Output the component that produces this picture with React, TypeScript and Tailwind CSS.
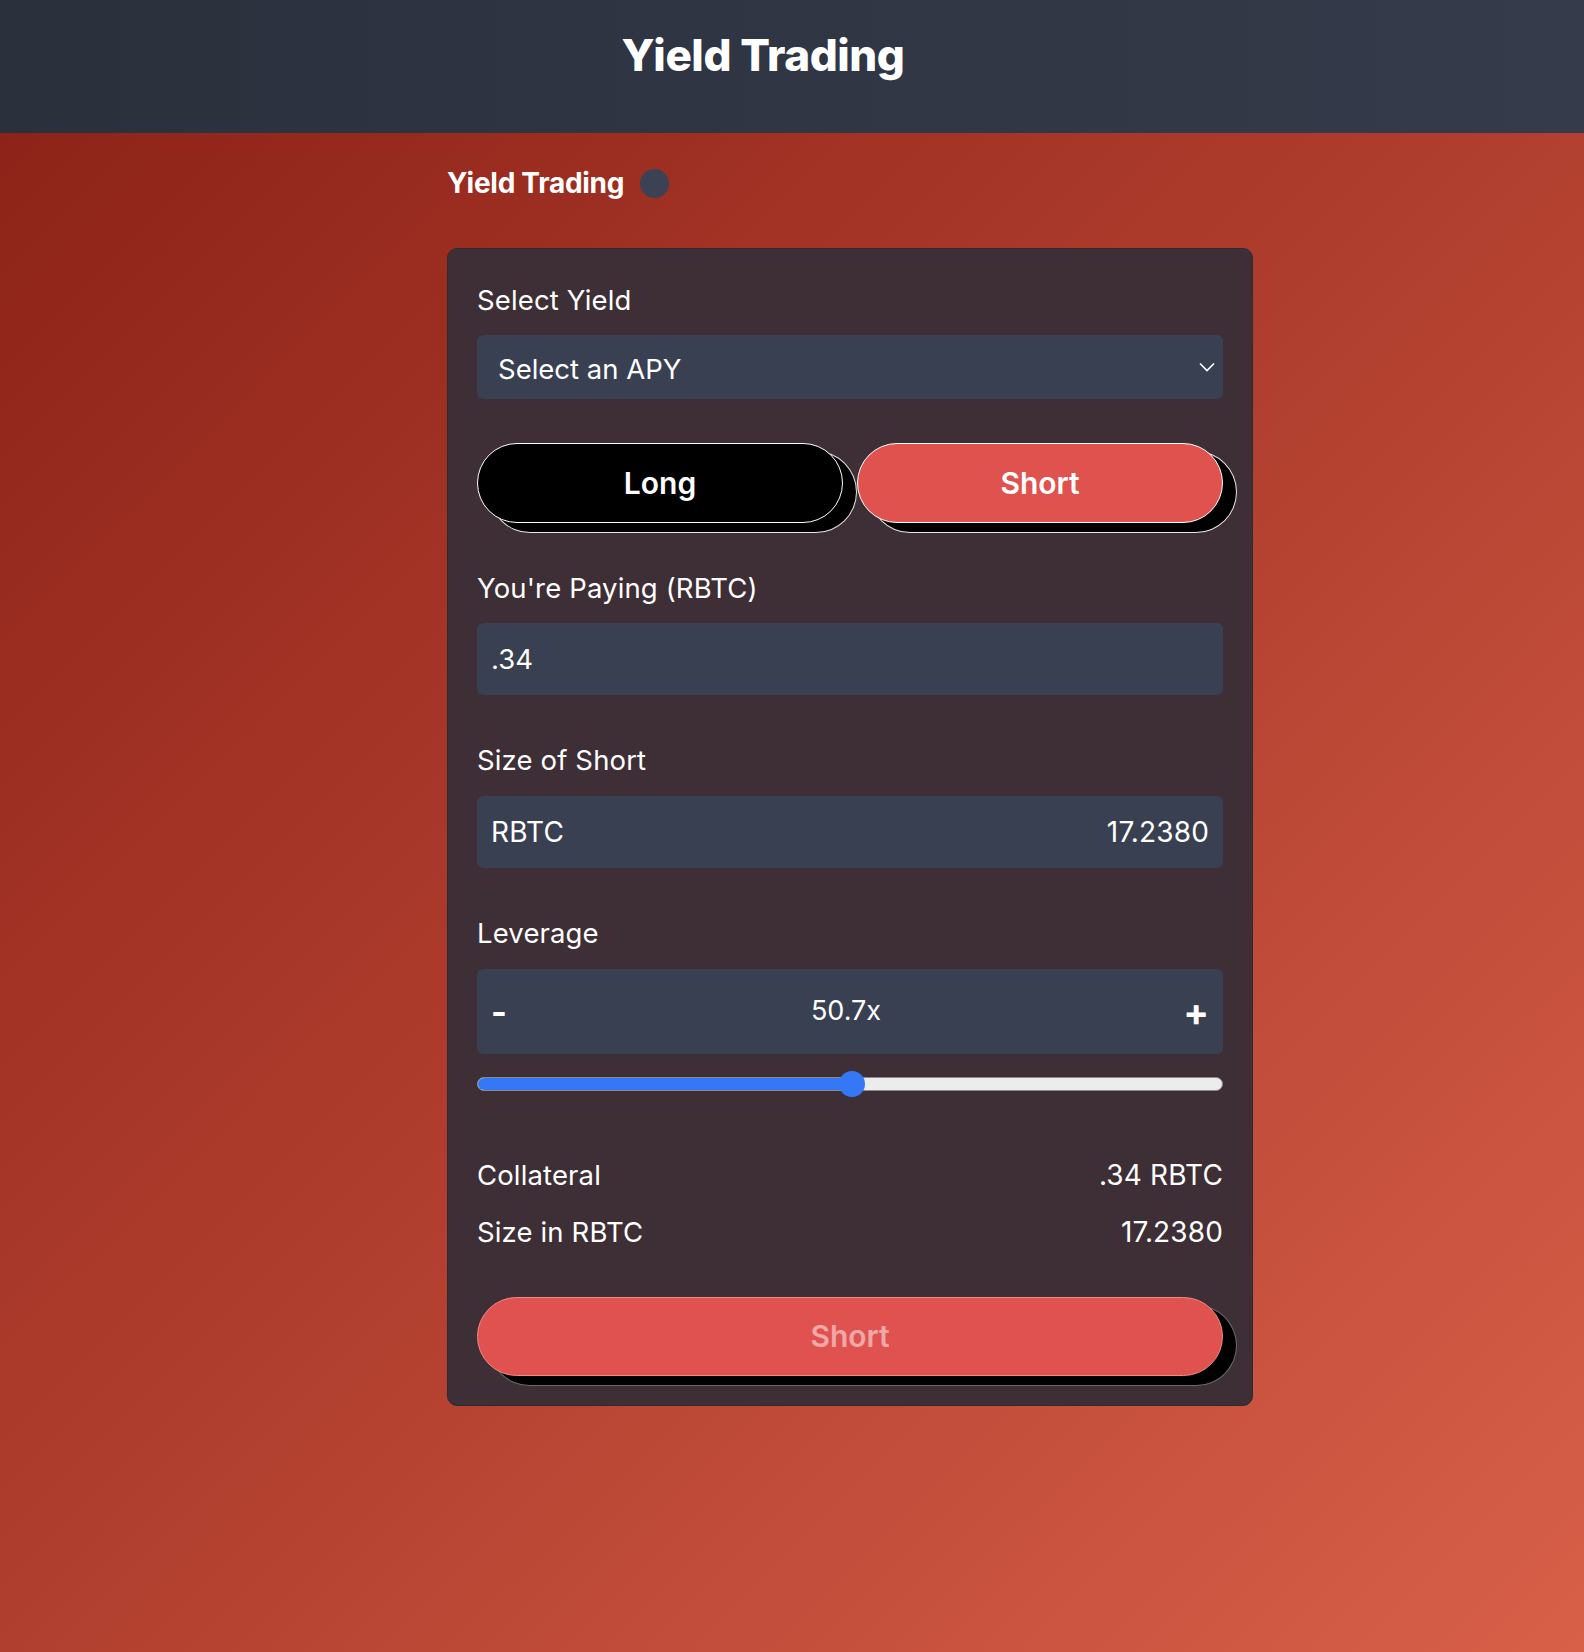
import React from "react";

function Label({ children, className = "" }: { children: React.ReactNode; className?: string }) {
  return <div className={"text-[27.5px] leading-[32px] tracking-[0.005em] text-white " + className}>{children}</div>;
}

export default function App() {
  const pct = 50.3;
  return (
    <div className="min-h-[1652px] w-full bg-[linear-gradient(135deg,#8a2016_0%,#b03e2e_50%,#d86049_100%)] font-['Inter',sans-serif] text-white">
      <header className="h-[133px] bg-[linear-gradient(90deg,#2a303c,#353b4a)] flex items-start justify-center pr-[58px] pt-[33px]">
        <h1 className="text-[44px] font-extrabold leading-[44px] tracking-[-0.01em]">Yield Trading</h1>
      </header>
      <main className="pl-[447px] pt-[32px]">
        <div className="flex items-center gap-[16px] h-[36px]">
          <h2 className="text-[28px] font-bold leading-[36px] tracking-[-0.01em]">Yield Trading</h2>
          <span className="w-[29px] h-[29px] rounded-full bg-[#3a4254]" />
        </div>
        <div className="mt-[47px] w-[806px] rounded-[10px] border border-[#2e2b30] bg-[#3e2e35] px-[29px] pt-[35px] pb-[29px]">
          <Label>Select Yield</Label>
          <div className="mt-[19px] h-[64px] rounded-[6px] bg-[#394051] pl-[21px] pr-[8px] flex items-center justify-between">
            <span className="text-[27.5px] pt-[5px]">Select an APY</span>
            <svg width="16" height="10" viewBox="0 0 16 10" fill="none">
              <polyline points="1,1.5 8,8.5 15,1.5" stroke="white" strokeWidth="1.6" />
            </svg>
          </div>
          <div className="mt-[44px] flex gap-[14px]">
            <button className="flex-1 h-[80px] rounded-full border border-white bg-black text-[30px] font-semibold text-white shadow-[13px_9px_0_0_#000,13px_9px_0_1px_#e5e5e5]">
              Long
            </button>
            <button className="flex-1 h-[80px] rounded-full border border-white bg-[#df524e] text-[30px] font-semibold text-white shadow-[13px_9px_0_0_#000,13px_9px_0_1px_#e5e5e5]">
              Short
            </button>
          </div>
          <Label className="mt-[49px]">You're Paying (RBTC)</Label>
          <div className="mt-[19px] h-[72px] rounded-[6px] bg-[#394051] px-[14px] flex items-center">
            <span className="text-[27.5px] pt-[2px]">.34</span>
          </div>
          <Label className="mt-[49px]">Size of Short</Label>
          <div className="mt-[20px] h-[72px] rounded-[6px] bg-[#394051] px-[14px] flex items-center justify-between text-[28px] tracking-[0.005em]">
            <span>RBTC</span>
            <span>17.2380</span>
          </div>
          <Label className="mt-[49px]">Leverage</Label>
          <div className="mt-[20px] h-[85px] rounded-[6px] bg-[#394051] px-[14px] flex items-center justify-between">
            <span className="w-[30px] text-[34px] font-bold leading-none">-</span>
            <span className="text-[27px] pr-[8px]">50.7x</span>
            <span className="w-[30px] text-right text-[38px] font-bold leading-none">+</span>
          </div>
          <div className="mt-[17px] relative h-[26px] flex items-center">
            <div className="relative h-[14px] w-full rounded-full bg-[#ececec] border border-[#8a8a8a] overflow-hidden">
              <div className="h-full bg-[#3478f6]" style={{ width: `${pct}%` }} />
            </div>
            <div
              className="absolute top-0 h-[26px] w-[26px] -ml-[13px] rounded-full bg-[#3478f6]"
              style={{ left: `${pct}%` }}
            />
          </div>
          <div className="mt-[62px] flex justify-between text-[27.5px] leading-[32px] tracking-[0.005em]">
            <span>Collateral</span>
            <span className="text-[28px]">.34 RBTC</span>
          </div>
          <div className="mt-[25px] flex justify-between text-[27.5px] leading-[32px] tracking-[0.005em]">
            <span>Size in RBTC</span>
            <span className="text-[28px]">17.2380</span>
          </div>
          <button className="mt-[49px] w-full h-[79px] rounded-full border border-[#f28a86] bg-[#df524f] text-[30px] font-semibold text-white/50 shadow-[13px_9px_0_0_#000,13px_9px_0_1px_#6a6a6a]">
            Short
          </button>
        </div>
      </main>
    </div>
  );
}
